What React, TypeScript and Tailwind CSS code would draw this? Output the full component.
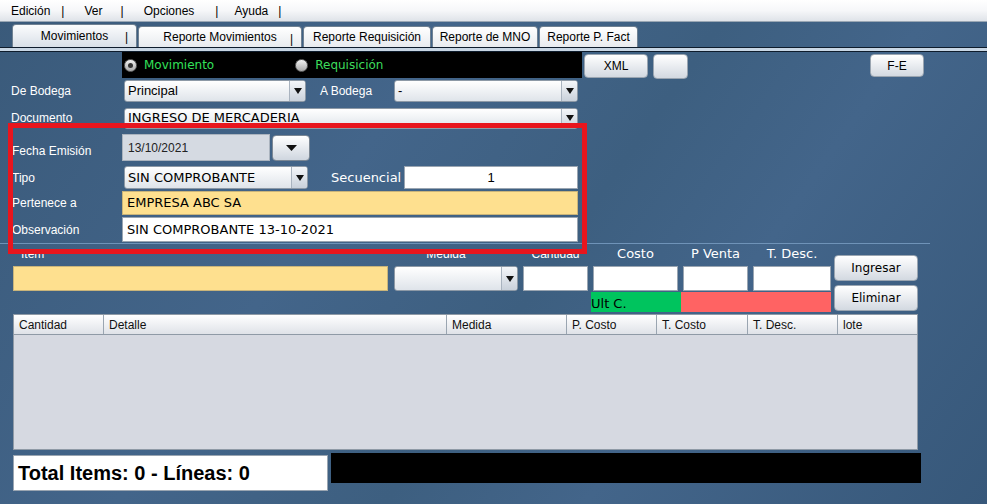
import React from 'react';

const sans = { fontFamily: '"Liberation Sans", Arial, sans-serif' };
const comic = { fontFamily: '"DejaVu Sans", "Noto Sans", sans-serif' };

function Arrow() {
  return (
    <div className="w-[16px] self-stretch flex items-center justify-center border-l border-[#a9b3bf] bg-gradient-to-b from-[#f4f6f9] to-[#c9d1db]">
      <svg width="8" height="6" viewBox="0 0 8 6">
        <path d="M0 0 L8 0 L4 6 Z" fill="#111" />
      </svg>
    </div>
  );
}

function Select({ w, text, comicFont = false, h = 'h-[22px]' }: { w: string; text: string; comicFont?: boolean; h?: string }) {
  return (
    <div className={`${w} ${h} flex items-stretch rounded-[3px] border border-[#8d99a6] bg-gradient-to-b from-white to-[#dfe4ea] overflow-hidden`}>
      <div className="flex-1 flex items-center pl-[3px] text-[13px] text-black" style={comicFont ? comic : sans}>
        {text}
      </div>
      <Arrow />
    </div>
  );
}

function Label({ children, w = 'w-[111px]' }: { children: React.ReactNode; w?: string }) {
  return (
    <div className={`${w} text-[12px] text-white shrink-0`} style={sans}>
      {children}
    </div>
  );
}

function Button({ w, h, children, font = sans }: { w: string; h: string; children?: React.ReactNode; font?: React.CSSProperties }) {
  return (
    <div
      className={`${w} ${h} rounded-[4px] border border-[#9aa5b1] bg-gradient-to-b from-white to-[#d3d9e1] flex items-center justify-center text-[12px] text-black`}
      style={font}
    >
      {children}
    </div>
  );
}

function Radio({ checked }: { checked?: boolean }) {
  return (
    <div className="w-[13px] h-[13px] rounded-full bg-gradient-to-b from-[#f3f3f3] to-[#a9a9a9] border border-[#666] flex items-center justify-center">
      {checked && <div className="w-[5px] h-[5px] rounded-full bg-[#333]" />}
    </div>
  );
}

const tabs = [
  { label: 'Movimientos', w: 'w-[125px]', pipe: true, active: true },
  { label: 'Reporte Movimientos', w: 'w-[164px]', pipe: true },
  { label: 'Reporte Requisición', w: 'w-[128px]' },
  { label: 'Reporte de MNO', w: 'w-[106px]' },
  { label: 'Reporte P. Fact', w: 'w-[99px]' },
];

const cols = [
  { label: 'Cantidad', w: 'w-[90px]' },
  { label: 'Detalle', w: 'w-[343px]' },
  { label: 'Medida', w: 'w-[120px]' },
  { label: 'P. Costo', w: 'w-[90px]' },
  { label: 'T. Costo', w: 'w-[91px]' },
  { label: 'T. Desc.', w: 'w-[90px]' },
  { label: 'lote', w: 'flex-1' },
];

export default function App() {
  return (
    <div
      className="relative w-[987px] h-[504px] overflow-hidden bg-[linear-gradient(125deg,#3a5a7a_0%,#43658a_35%,#3d5f80_55%,#43658a_70%,#37587a_100%)]"
      style={sans}
    >
      {/* Menu */}
      <div className="h-[22px] flex items-center text-[12px] text-black bg-gradient-to-b from-white via-[#f6f7f9] to-[#dfe3e9] border-b border-[#9aa7b4]">
        <span className="ml-[11px]">Edición</span>
        <span className="ml-[11px]">|</span>
        <span className="ml-[20px]">Ver</span>
        <span className="ml-[18px]">|</span>
        <span className="ml-[20px]">Opciones</span>
        <span className="ml-[21px]">|</span>
        <span className="ml-[16px]">Ayuda</span>
        <span className="ml-[10px]">|</span>
      </div>

      {/* Tabs */}
      <div className="h-[25px] flex items-end pl-[12px]">
        {tabs.map((t) => (
          <div
            key={t.label}
            className={`${t.w} ${
              t.active
                ? 'h-[23px] bg-gradient-to-b from-[#fbfcfd] to-[#d9e0e8]'
                : 'h-[21px] bg-gradient-to-b from-white to-[#e8ebef]'
            } mr-[1px] rounded-t-[4px] border border-b-0 border-[#6f8192] flex items-center justify-center relative text-[12px] text-black`}
          >
            <span>{t.label}</span>
            {t.pipe && <span className="absolute right-[8px] top-[3px]">|</span>}
          </div>
        ))}
      </div>
      <div className="h-[5px] border-t border-b border-[#0e1c2c] bg-[#c8d6e4]" />

      {/* Radio bar + buttons */}
      <div className="flex items-start h-[28px]">
        <div className="ml-[122px] w-[460px] h-[26px] bg-black flex items-center">
          <div className="ml-[2px]"><Radio checked /></div>
          <span className="ml-[7px] text-[12px] text-[#33e05a]" style={comic}>Movimiento</span>
          <div className="ml-[81px]"><Radio /></div>
          <span className="ml-[7px] text-[12px] text-[#3ddc5c]" style={comic}>Requisición</span>
        </div>
        <div className="ml-[2px] mt-[2px]"><Button w="w-[64px]" h="h-[24px]">XML</Button></div>
        <div className="ml-[5px] mt-[2px]"><Button w="w-[35px]" h="h-[25px]" /></div>
        <div className="ml-[182px] mt-[2px]"><Button w="w-[54px]" h="h-[23px]">F-E</Button></div>
      </div>

      {/* Form rows */}
      <div className="flex items-center h-[22px] pl-[11px]">
        <Label w="w-[113px]">De Bodega</Label>
        <Select w="w-[182px]" text="Principal" />
        <span className="ml-[14px] w-[74px] text-[12px] text-white">A Bodega</span>
        <Select w="w-[184px]" text="-" />
      </div>
      <div className="flex items-center h-[22px] mt-[5px] pl-[11px]">
        <Label w="w-[113px]">Documento</Label>
        <Select w="w-[454px]" text="INGRESO DE MERCADERIA" comicFont h="h-[21px]" />
      </div>

      <div className="flex items-center h-[27px] mt-[5px] pl-[12px]">
        <div className="w-[110px] pt-[6px] text-[12px] text-white">Fecha Emisión</div>
        <div className="w-[148px] h-[27px] bg-[#d5dae2] border border-[#aab3be] flex items-center pl-[5px] text-[12px] text-[#222]">
          13/10/2021
        </div>
        <div className="ml-[2px] w-[38px] h-[26px] rounded-[4px] border border-[#7b8794] bg-gradient-to-b from-white to-[#cfd6df] flex items-center justify-center">
          <svg width="11" height="6" viewBox="0 0 11 6">
            <path d="M0 0 L11 0 L5.5 6 Z" fill="#111" />
          </svg>
        </div>
      </div>

      <div className="flex items-center h-[23px] mt-[5px] pl-[12px]">
        <Label w="w-[112px]">Tipo</Label>
        <Select w="w-[184px]" text="SIN COMPROBANTE" comicFont h="h-[23px]" />
        <span className="ml-[23px] w-[73px] text-[13px] text-white" style={comic}>Secuencial</span>
        <div className="w-[174px] h-[23px] bg-white border border-[#9aa5b1] flex items-center justify-center text-[13px] text-black">
          1
        </div>
      </div>

      <div className="flex items-center h-[24px] mt-[2px] pl-[12px]">
        <Label w="w-[110px]">Pertenece a</Label>
        <div className="w-[456px] h-[24px] bg-[#fee08f] border border-[#c9b47a] flex items-center pl-[4px] text-[13px] text-black" style={comic}>
          EMPRESA ABC SA
        </div>
      </div>

      <div className="flex items-center h-[25px] mt-[2px] pl-[12px]">
        <Label w="w-[110px]">Observación</Label>
        <div className="w-[456px] h-[25px] bg-white border border-[#9aa5b1] flex items-center pl-[4px] text-[13px] text-black" style={comic}>
          SIN COMPROBANTE 13-10-2021
        </div>
      </div>

      <div className="mt-[1px] w-[930px] h-[1px] bg-[#6f93b8]" />

      {/* Item entry */}
      <div className="flex pl-[13px]">
        <div className="flex flex-col">
          <div className="flex items-end gap-0">
            <div className="w-[375px] flex flex-col">
              <div className="h-[20px] pl-[8px] flex items-center text-[12px] text-white">Item</div>
              <div className="mt-[2px] h-[25px] bg-[#fee08f] border border-[#c9b47a]" />
            </div>
            <div className="ml-[6px] w-[124px] flex flex-col">
              <div className="h-[20px] flex items-center justify-center pr-[20px] text-[12px] text-white">Medida</div>
              <div className="mt-[2px]">
                <Select w="w-[124px]" text="" h="h-[25px]" />
              </div>
            </div>
            <div className="ml-[5px] w-[65px] flex flex-col">
              <div className="h-[20px] flex items-center justify-center whitespace-nowrap text-[12px] text-white">Cantidad</div>
              <div className="mt-[2px] h-[25px] bg-white border border-[#9aa5b1]" />
            </div>
            <div className="ml-[5px] w-[85px] flex flex-col">
              <div className="h-[20px] flex items-center justify-center text-[13px] text-white" style={comic}>Costo</div>
              <div className="mt-[2px] h-[25px] bg-white border border-[#9aa5b1]" />
            </div>
            <div className="ml-[5px] w-[65px] flex flex-col">
              <div className="h-[20px] flex items-center justify-center text-[13px] text-white" style={comic}>P Venta</div>
              <div className="mt-[2px] h-[25px] bg-white border border-[#9aa5b1]" />
            </div>
            <div className="ml-[5px] w-[78px] flex flex-col">
              <div className="h-[20px] flex items-center justify-center text-[13px] text-white" style={comic}>T. Desc.</div>
              <div className="mt-[2px] h-[25px] bg-white border border-[#9aa5b1]" />
            </div>
          </div>
          <div className="ml-[578px] mt-[1px] h-[20px] flex">
            <div className="w-[90px] bg-[#00c45e] flex items-end text-[13px] text-black leading-[17px]" style={comic}>
              Ult C.
            </div>
            <div className="w-[150px] bg-[#ff6363]" />
          </div>
        </div>
        <div className="ml-[3px] flex flex-col pt-[11px] gap-[4px]">
          <Button w="w-[84px]" h="h-[26px]" font={comic}>Ingresar</Button>
          <Button w="w-[84px]" h="h-[26px]" font={comic}>Eliminar</Button>
        </div>
      </div>

      {/* Table */}
      <div className="ml-[13px] mt-[2px] w-[905px] h-[136px] flex flex-col bg-[#d6d9e1] border border-[#8f9aa6]">
        <div className="h-[20px] flex bg-gradient-to-b from-white to-[#dfe2e8] border-b border-[#8f9aa6]">
          {cols.map((c, i) => (
            <div
              key={c.label}
              className={`${c.w} flex items-center pl-[5px] text-[12px] text-[#111] ${
                i < cols.length - 1 ? 'border-r border-[#9aa5b1]' : ''
              }`}
            >
              {c.label}
            </div>
          ))}
        </div>
      </div>

      {/* Footer */}
      <div className="flex items-start ml-[13px] mt-[3px]">
        <div className="w-[315px] h-[36px] mt-[2px] bg-white border border-[#9aa5b1] flex items-center pl-[4px] text-[20px] font-bold text-black">
          Total Items: 0 - Líneas: 0
        </div>
        <div className="ml-[3px] w-[590px] h-[30px] bg-black" />
      </div>

      {/* Highlight overlay */}
      <div className="absolute left-[8px] top-[123px] w-[579px] h-[131px] border-[5px] border-[#e8151d] pointer-events-none" />
    </div>
  );
}
